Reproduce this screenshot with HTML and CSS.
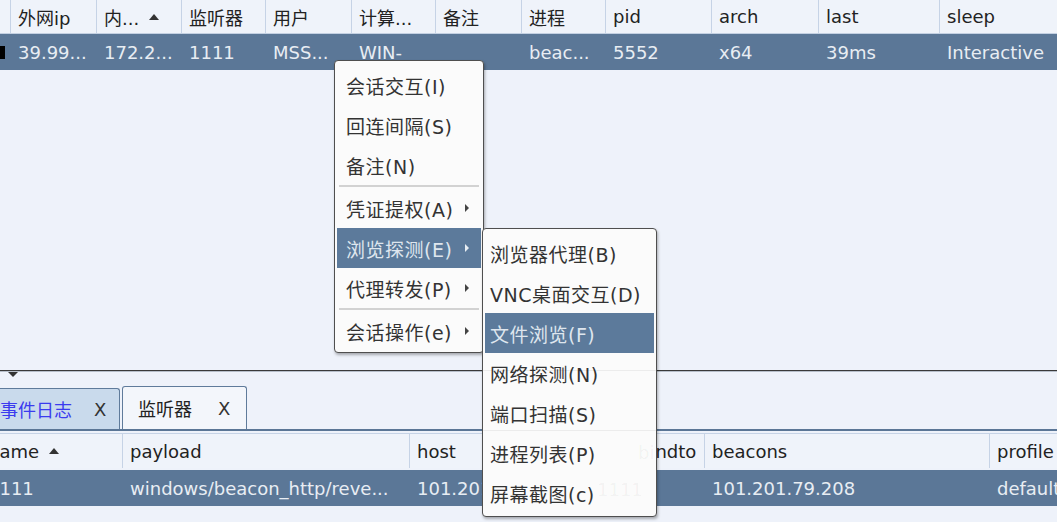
FILE: index.html
```html
<!DOCTYPE html>
<html lang="zh">
<head>
    <meta charset="UTF-8">
    <title>Beacons</title>
    <link rel="stylesheet" href="styles.css">
</head>
<body>

    <div class="top">
        <div class="grid head">
            <div class="cell"></div>
            <div class="cell">外网ip</div>
            <div class="cell">内... <span class="sort"></span></div>
            <div class="cell">监听器</div>
            <div class="cell">用户</div>
            <div class="cell">计算...</div>
            <div class="cell">备注</div>
            <div class="cell">进程</div>
            <div class="cell">pid</div>
            <div class="cell">arch</div>
            <div class="cell">last</div>
            <div class="cell">sleep</div>
        </div>
        <div class="grid row">
            <div class="cell"><span class="mark"></span></div>
            <div class="cell">39.99...</div>
            <div class="cell">172.2...</div>
            <div class="cell">1111</div>
            <div class="cell">MSS...</div>
            <div class="cell">WIN-</div>
            <div class="cell"></div>
            <div class="cell">beac...</div>
            <div class="cell">5552</div>
            <div class="cell">x64</div>
            <div class="cell">39ms</div>
            <div class="cell">Interactive</div>
        </div>
    </div>

    <div class="splitter"></div>

    <div class="tabbar">
        <div class="collapse"></div>
        <div class="tabs">
            <div class="tab log">事件日志 <span class="close">X</span></div>
            <div class="tab active">监听器 <span class="close">X</span></div>
        </div>
    </div>

    <div class="bottom">
        <div class="lgrid head">
            <div class="cell">name <span class="sort"></span></div>
            <div class="cell">payload</div>
            <div class="cell">host</div>
            <div class="cell">port</div>
            <div class="cell">bindto</div>
            <div class="cell">beacons</div>
            <div class="cell">profile</div>
        </div>
        <div class="lgrid row">
            <div class="cell">1111</div>
            <div class="cell">windows/beacon_http/reve...</div>
            <div class="cell">101.201.79...</div>
            <div class="cell">1111</div>
            <div class="cell"></div>
            <div class="cell">101.201.79.208</div>
            <div class="cell">default</div>
        </div>
    </div>

    <!-- popup menus -->
    <div class="menu main-menu">
        <div class="item">会话交互(I)</div>
        <div class="item">回连间隔(S)</div>
        <div class="item">备注(N)</div>
        <div class="sep"></div>
        <div class="item sub">凭证提权(A)</div>
        <div class="item sub selected">浏览探测(E)</div>
        <div class="item sub">代理转发(P)</div>
        <div class="sep"></div>
        <div class="item sub">会话操作(e)</div>
    </div>

    <div class="menu sub-menu">
        <div class="ghost-line g1"></div>
        <div class="ghost-line g2"></div>
        <span class="ghost t1">bi</span>
        <span class="ghost t2">1111</span>
        <div class="item">浏览器代理(B)</div>
        <div class="item">VNC桌面交互(D)</div>
        <div class="item selected">文件浏览(F)</div>
        <div class="item">网络探测(N)</div>
        <div class="item">端口扫描(S)</div>
        <div class="item">进程列表(P)</div>
        <div class="item">屏幕截图(c)</div>
    </div>

</body>
</html>
```

FILE: styles.css
```css
body {
    margin: 0;
    width: 1057px;
    height: 522px;
    overflow: hidden;
    position: relative;
    background-color: #eef2fa;
    font-family: "DejaVu Sans", "Noto Sans CJK SC", sans-serif;
    font-size: 18px;
    color: #222;
}

/* tables */
.grid {
    display: grid;
    grid-template-columns: 11px 86px 85px 84px 86px 84px 86px 84px 106px 107px 121px 117px;
}
.lgrid {
    display: grid;
    grid-template-columns: 142px 287px 147px 75px 73px 285px 120px;
    margin-left: -19px;
}
.cell {
    padding-left: 7px;
    white-space: nowrap;
    overflow: hidden;
    display: flex;
    align-items: center;
}
.head {
    height: 33px;
    border-bottom: 1px solid #c3d0e2;
    background-color: #eff3fa;
}
.head .cell {
    border-right: 1px solid #c6d3e6;
}
.head .cell:last-child {
    border-right: none;
}
.row {
    height: 36px;
    background-color: #5b7797;
    color: #e8edf3;
}
.grid .cell:first-child {
    padding-left: 0;
}
.sort {
    display: inline-block;
    width: 0;
    height: 0;
    margin-left: 10px;
    border-left: 5px solid transparent;
    border-right: 5px solid transparent;
    border-bottom: 6px solid #333;
}
.mark {
    display: block;
    width: 5px;
    height: 13px;
    background-color: #000;
}

.top {
    height: 370px;
}
.splitter {
    height: 1px;
    background-color: #3a3a3a;
    border-bottom: 1px solid #b7bfca;
}

/* tabs */
.tabbar {
    height: 59px;
    display: flex;
    flex-direction: column;
    justify-content: flex-end;
}
.collapse {
    width: 0;
    height: 0;
    margin: 1px 0 9px 8px;
    border-left: 5px solid transparent;
    border-right: 5px solid transparent;
    border-top: 5px solid #333;
}
.tabs {
    display: flex;
    align-items: flex-end;
    margin-left: -17px;
    border-bottom: 2px solid #5b7696;
}
.tab {
    height: 41px;
    display: flex;
    align-items: center;
    flex-shrink: 0;
    white-space: nowrap;
    padding: 0 0 0 16px;
    border: 1px solid #5f7b9b;
    border-bottom: none;
    border-radius: 3px 3px 0 0;
    box-sizing: border-box;
}
.tab .close {
    margin-left: 22px;
    color: #333;
}
.log {
    width: 137px;
    padding-left: 16px;
    background-color: #c9daec;
    color: #3b3bef;
    margin-right: 2px;
}
.active {
    width: 125px;
    height: 43px;
    background-color: #f3f6fb;
    padding-left: 15px;
}
.active .close {
    margin-left: 26px;
}

.bottom {
    margin-top: 2px;
}
.bottom .head {
    height: 35px;
    border-top: 1px solid #c6d3e6;
    box-sizing: border-box;
    margin-bottom: 2px;
    border-bottom: none;
}

/* popup menus */
.menu {
    position: absolute;
    background-color: #fbfbfb;
    border: 1px solid #4f4f4f;
    border-radius: 4px;
    box-shadow: 1px 2px 3px rgba(0, 0, 0, 0.3);
    font-size: 19px;
    letter-spacing: 0.5px;
    color: #333;
}
.main-menu {
    left: 334px;
    top: 60px;
    width: 144px;
    height: 287px;
    padding: 4px 2px 0;
}
.sub-menu {
    left: 482px;
    top: 228px;
    width: 169px;
    padding: 4px 2px 3px;
    overflow: hidden;
}
.item {
    height: 40px;
    display: flex;
    align-items: center;
    padding-left: 9px;
    white-space: nowrap;
}
.sub-menu .item {
    padding-left: 5px;
}
.item.sub {
    justify-content: space-between;
    padding-right: 12px;
}
.item.sub::after {
    content: "";
    width: 0;
    height: 0;
    border-top: 4px solid transparent;
    border-bottom: 4px solid transparent;
    border-left: 4px solid #444;
}
.item.selected {
    background-color: #5c7a9b;
    color: #dfe6ee;
}
.item.selected::after {
    border-left-color: #e8eef4;
}
.sep {
    height: 2px;
    margin: 0 2px 1px;
    background-color: #d2d2d2;
}

/* faint traces of the table behind the submenu */
.ghost-line {
    position: absolute;
    left: 0;
    right: 0;
    height: 1px;
    background-color: rgba(0, 0, 0, 0.06);
}
.g1 { top: 141px; }
.g2 { top: 201px; }
.ghost {
    position: absolute;
    font-size: 18px;
    letter-spacing: 0;
    color: rgba(0, 0, 0, 0.05);
}
.t1 { left: 155px; top: 213px; }
.t2 { left: 114px; top: 250px; }
```
